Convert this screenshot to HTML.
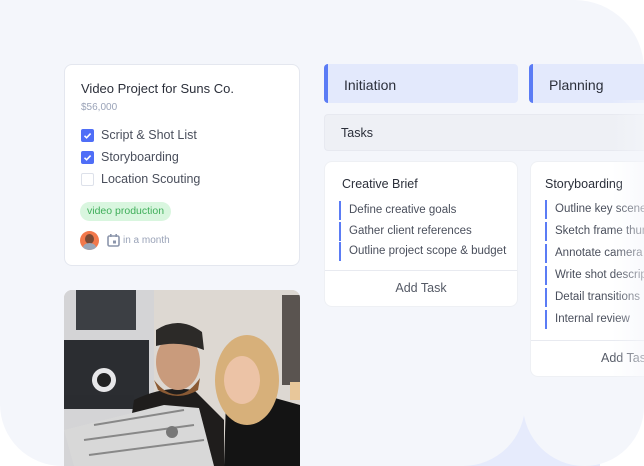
<!DOCTYPE html>
<html><head><meta charset="utf-8"><style>
*{margin:0;padding:0;box-sizing:border-box}
body{width:644px;height:466px;overflow:hidden;background:#fff;position:relative;font-family:"Liberation Sans",sans-serif;color:#2b2f3a}
.abs{position:absolute}
.p1{left:0;top:0;width:525px;height:466px;background:#f4f6fb;border-radius:0 0 62px 62px}
.p2{left:523px;top:0;width:121px;height:466px;background:#f4f6fb;border-radius:0 70px 60px 62px}
.blue{left:440px;top:380px;width:160px;height:86px;background:#e6ebfc;z-index:0}
.card{background:#fff;border:1px solid #e4e7ef;border-radius:8px}
.chk{position:absolute;left:16px;width:13px;height:13px;border-radius:2px}
.chk.on{background:#4f6ef7}
.chk.off{border:1px solid #dde1ea;background:#fff}
.li{position:absolute;left:36px;font-size:12.5px;color:#4a4f5c}
.stage{background:#e3e9fc;border-left:4px solid #5b7cf5;border-radius:4px;font-size:14px;color:#2b2f3a;padding:13px 0 0 16px;height:39px}
.t{position:absolute;font-size:11.5px;color:#4a4f5c;border-left:2px solid #5b7cf5;padding-left:8px;height:19px;line-height:19px;white-space:nowrap}
</style></head><body>
<div class="abs blue"></div>
<div class="abs p1"></div>
<div class="abs p2"></div>

<div class="abs card" style="left:64px;top:64px;width:236px;height:202px">
 <div class="abs" style="left:16px;top:16px;font-size:13px;color:#2b2f3a">Video Project for Suns Co.</div>
 <div class="abs" style="left:16px;top:37px;font-size:10px;color:#9aa3b8">$56,000</div>
 <div class="chk on" style="top:64px"><svg width="13" height="13"><path d="M3.5 6.8 5.6 8.8 9.6 4.6" stroke="#fff" stroke-width="1.6" fill="none"/></svg></div>
 <div class="li" style="top:63px">Script &amp; Shot List</div>
 <div class="chk on" style="top:86px"><svg width="13" height="13"><path d="M3.5 6.8 5.6 8.8 9.6 4.6" stroke="#fff" stroke-width="1.6" fill="none"/></svg></div>
 <div class="li" style="top:85px">Storyboarding</div>
 <div class="chk off" style="top:108px"></div>
 <div class="li" style="top:107px">Location Scouting</div>
 <div class="abs" style="left:15px;top:137px;height:19px;padding:0 7px;border-radius:10px;background:#d9f6df;color:#3fae5a;font-size:10.5px;line-height:19px">video production</div>
 <div class="abs" style="left:15px;top:166px;width:19px;height:19px;border-radius:50%;background:#f2784b;overflow:hidden"><div style="position:absolute;left:5px;top:3px;width:9px;height:10px;border-radius:50%;background:#7a4a36"></div><div style="position:absolute;left:3px;top:12px;width:13px;height:9px;border-radius:50%;background:#9aa6b8"></div></div>
 <svg class="abs" style="left:42px;top:169px" width="13" height="13"><rect x="1" y="2" width="11" height="10" rx="1.5" fill="none" stroke="#8b95ab" stroke-width="1.6"/><rect x="3" y="0" width="1.6" height="3" fill="#8b95ab"/><rect x="8.4" y="0" width="1.6" height="3" fill="#8b95ab"/><rect x="6" y="6.5" width="3" height="3" fill="#8b95ab"/></svg>
 <div class="abs" style="left:58px;top:170px;font-size:10px;color:#9aa3b8">in a month</div>
</div>

<div class="abs" style="left:64px;top:290px;width:236px;height:176px;border-radius:8px 8px 0 0;overflow:hidden;background:#e6e1dc">
<svg width="236" height="176">
 <rect x="0" y="0" width="236" height="176" fill="#ddd8d2"/>
 <rect x="0" y="0" width="90" height="176" fill="#d4d4d6"/>
 <rect x="218" y="5" width="18" height="90" fill="#5a5450"/>
 <rect x="226" y="92" width="10" height="18" fill="#e8c79a"/>
 <rect x="12" y="0" width="60" height="40" fill="#3c3f44"/>
 <rect x="0" y="50" width="85" height="60" fill="#2b2d31"/>
 <circle cx="40" cy="90" r="12" fill="#e7e7e9"/><circle cx="40" cy="90" r="7" fill="#222"/>
 <rect x="0" y="105" width="70" height="14" fill="#2a2c30"/>
 <path d="M60 176 L70 110 Q100 95 130 100 L160 130 L160 176Z" fill="#1f1d1c"/>
 <ellipse cx="114" cy="72" rx="22" ry="28" fill="#c99b7c"/>
 <path d="M90 90 Q114 120 136 88 L134 100 Q114 112 94 100Z" fill="#8a5a34"/>
 <path d="M92 40 Q115 25 138 42 L140 60 Q115 50 92 56Z" fill="#2c2a28"/>
 <path d="M160 176 L162 110 Q170 100 200 105 L236 115 L236 176Z" fill="#141414"/>
 <ellipse cx="183" cy="90" rx="32" ry="45" fill="#d7b07a"/>
 <ellipse cx="178" cy="90" rx="18" ry="24" fill="#ecc3a6"/>
 <path d="M0 140 L100 115 L135 118 L150 176 L10 176Z" fill="#d8d8d8"/>
 <path d="M30 135 L120 120 M20 150 L130 135 M25 165 L140 150" stroke="#888" stroke-width="2"/>
 <circle cx="108" cy="142" r="6" fill="#777"/>
</svg>
</div>

<div class="abs stage" style="left:324px;top:64px;width:194px">Initiation</div>
<div class="abs stage" style="left:529px;top:64px;width:115px;border-radius:4px 0 0 4px">Planning</div>
<div class="abs" style="left:324px;top:114px;width:320px;height:37px;background:#eef0f5;border:1px solid #e7e9f0;border-right:none;border-radius:4px 0 0 4px;font-size:12.5px;padding:11px 0 0 16px">Tasks</div>

<div class="abs card" style="left:324px;top:161px;width:194px;height:146px;border-color:#eef0f4">
 <div class="abs" style="left:17px;top:15px;font-size:12.5px">Creative Brief</div>
 <div class="t" style="left:14px;top:39px">Define creative goals</div>
 <div class="t" style="left:14px;top:60px">Gather client references</div>
 <div class="t" style="left:14px;top:80px">Outline project scope &amp; budget</div>
 <div class="abs" style="left:0;top:108px;width:192px;border-top:1px solid #e8eaf0;text-align:center;font-size:12.5px;color:#555a66;padding-top:10px">Add Task</div>
</div>

<div class="abs card" style="left:530px;top:161px;width:114px;height:216px;border-color:#eef0f4;border-right:none;border-radius:8px 0 0 8px;overflow:hidden">
 <div class="abs" style="left:14px;top:15px;font-size:12.5px;white-space:nowrap">Storyboarding</div>
 <div class="t" style="left:14px;top:38px">Outline key scenes</div>
 <div class="t" style="left:14px;top:60px">Sketch frame thumbnails</div>
 <div class="t" style="left:14px;top:82px">Annotate camera</div>
 <div class="t" style="left:14px;top:104px">Write shot descriptions</div>
 <div class="t" style="left:14px;top:126px">Detail transitions</div>
 <div class="t" style="left:14px;top:148px">Internal review</div>
 <div class="abs" style="left:0;top:178px;width:114px;height:38px;border-top:1px solid #e8eaf0;font-size:12.5px;color:#555a66;padding:10px 0 0 70px;white-space:nowrap;overflow:hidden">Add Task</div>
</div>
<div class="abs" style="left:612px;top:100px;width:32px;height:290px;background:linear-gradient(to right,rgba(244,246,251,0),rgba(244,246,251,0.6))"></div>
</body></html>
